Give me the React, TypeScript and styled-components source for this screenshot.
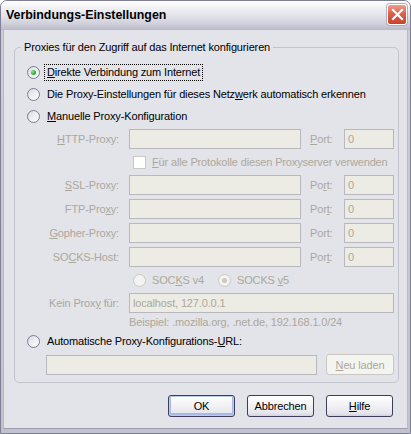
import React from "react";
import styled, { createGlobalStyle, css } from "styled-components";

const Global = createGlobalStyle`
  html, body { margin: 0; padding: 0; background: #ffffff; }
  body {
    font-family: "Liberation Sans", Arial, sans-serif;
    font-size: 11px;
    letter-spacing: -0.15px;
    color: #000;
  }
  * { box-sizing: border-box; }
`;

const disabledText = "#aca899";

const Window = styled.div`
  width: 411px;
  height: 434px;
  display: flex;
  flex-direction: column;
  border: 1px solid #7e7e94;
  border-radius: 7px 7px 0 0;
  background: #d4d4de;
  overflow: hidden;
`;

const TitleBar = styled.div`
  height: 29px;
  flex: none;
  display: flex;
  align-items: flex-start;
  justify-content: space-between;
  padding: 0 3px 0 5px;
  background: linear-gradient(
    to bottom,
    #ffffff 0%,
    #f1f1f5 25%,
    #e0e0e8 55%,
    #cfcfda 80%,
    #b9b9c8 100%
  );
`;

const Title = styled.div`
  font-family: "Liberation Sans", Arial, sans-serif;
  font-weight: bold;
  font-size: 12.4px;
  letter-spacing: 0;
  line-height: 29px;
  color: #000;
`;

const CloseButton = styled.div`
  margin-top: 3px;
  width: 20px;
  height: 21px;
  border-radius: 3px;
  border: 1px solid #ffffff;
  box-shadow: 0 0 0 1px #b0b0bf;
  background: linear-gradient(to bottom, #ec9d8e 0%, #df5f48 45%, #c94329 100%);
  display: flex;
  align-items: center;
  justify-content: center;
`;

const Frame = styled.div`
  flex: 1;
  display: flex;
  padding: 0 3px 4px;
  background: linear-gradient(to bottom, #cdcdd8, #c2c2ce);
`;

const Body = styled.div`
  flex: 1;
  display: flex;
  flex-direction: column;
  padding: 11px 8px 0 10px;
  background: #e3e3ea;
  border-left: 1px solid #b9b9c7;
  border-right: 1px solid #b9b9c7;
  border-bottom: 1px solid #9d9daf;
  margin-left: -1px;
  margin-right: -1px;
`;

const Group = styled.fieldset`
  margin: 0;
  padding: 0;
  min-width: 0;
  border: 1px solid #c3c3cd;
  border-radius: 5px;
`;

const Legend = styled.legend`
  margin-left: 6px;
  padding: 0 3px;
  line-height: 13px;
  font-size: 11px;
  color: #000;
`;

const Content = styled.div`
  display: flex;
  flex-direction: column;
  padding: 7px 3px 7px 0;
`;

const RadioRow = styled.div`
  height: 22px;
  display: flex;
  align-items: center;
  padding-left: 12px;
`;

const RadioCircle = styled.span<{ $checked?: boolean; $disabled?: boolean }>`
  position: relative;
  flex: none;
  width: 13px;
  height: 13px;
  border-radius: 50%;
  border: 1px solid ${(p) => (p.$disabled ? "#cac8c0" : "#7c7c95")};
  background: ${(p) =>
    p.$disabled
      ? "#f3f3f3"
      : "linear-gradient(135deg, #d6d6df 0%, #ececf1 45%, #ffffff 100%)"};
  ${(p) =>
    p.$checked &&
    css`
      &::after {
        content: "";
        position: absolute;
        left: 3px;
        top: 3px;
        width: 5px;
        height: 5px;
        border-radius: 50%;
        background: ${p.$disabled
          ? "#cac8c0"
          : "radial-gradient(circle at 35% 35%, #8ee58e 0%, #2fb12f 55%, #178f17 100%)"};
      }
    `}
`;

const RadioLabel = styled.span<{ $focused?: boolean; $disabled?: boolean }>`
  margin-left: 4px;
  padding: 0 2px;
  line-height: 15px;
  border: 1px dotted ${(p) => (p.$focused ? "#000" : "transparent")};
  color: ${(p) => (p.$disabled ? disabledText : "#000")};
  white-space: nowrap;
`;

const Key = styled.span`
  text-decoration: underline;
`;

const ManualGrid = styled.div`
  margin-top: 2px;
  display: grid;
  grid-template-columns: 114px 172px 43px 50px;
  row-gap: 4px;
  align-items: center;
`;

const FieldLabel = styled.label`
  text-align: right;
  padding-right: 10px;
  color: ${disabledText};
  white-space: nowrap;
`;

const PortLabel = styled.label`
  padding-left: 9px;
  color: ${disabledText};
  white-space: nowrap;
`;

const TextBox = styled.div<{ $span?: number }>`
  height: 20px;
  line-height: 18px;
  padding: 0 3px;
  border: 1px solid #b9b9bd;
  background: #ecebe4;
  color: ${disabledText};
  white-space: nowrap;
  ${(p) => p.$span && css`grid-column: span ${p.$span};`}
`;

const OptionLine = styled.div<{ $height: number }>`
  grid-column: 2 / span 3;
  height: ${(p) => p.$height}px;
  display: flex;
  align-items: center;
  padding-left: 4px;
  color: ${disabledText};
  white-space: nowrap;
`;

const CheckBox = styled.span`
  flex: none;
  width: 13px;
  height: 13px;
  border: 1px solid #cac8c0;
  background: #ffffff;
  margin-right: 6px;
`;

const SocksOption = styled.div`
  display: flex;
  align-items: center;
  margin-right: 14px;
  & > span:last-child {
    margin-left: 6px;
  }
`;

const Hint = styled.div`
  grid-column: 2 / span 3;
  height: 16px;
  line-height: 16px;
  margin-top: -3px;
  color: ${disabledText};
  white-space: nowrap;
`;

const UrlRow = styled.div`
  margin-top: 2px;
  padding-left: 31px;
  display: flex;
  align-items: center;
  gap: 9px;
`;

const UrlBox = styled(TextBox)`
  width: 271px;
`;

const buttonBase = css`
  height: 22px;
  border-radius: 3px;
  font-family: "Liberation Sans", Arial, sans-serif;
  font-size: 11px;
  display: flex;
  align-items: center;
  justify-content: center;
`;

const SmallButton = styled.div`
  ${buttonBase};
  width: 68px;
  height: 21px;
  border: 1px solid #cac8c0;
  background: #f4f4f1;
  color: ${disabledText};
`;

const ButtonBar = styled.div`
  display: flex;
  justify-content: flex-end;
  gap: 12px;
  margin-top: 12px;
  padding-right: 6px;
`;

const DialogButton = styled.div<{ $default?: boolean }>`
  ${buttonBase};
  width: 67px;
  border: 1px solid #3d3d5c;
  color: #000;
  background: linear-gradient(to bottom, #ffffff 0%, #f4f4f7 40%, #e6e6ec 85%, #d2d2dc 100%);
  ${(p) =>
    p.$default &&
    css`
      box-shadow: inset 0 0 0 1px #b9cbef, inset 0 -1px 0 2px #a4bbe8;
    `}
`;

const CloseIcon = () => (
  <svg width="13" height="13" viewBox="0 0 13 13">
    <path d="M2 2 L11 11 M11 2 L2 11" stroke="#ffffff" strokeWidth="2.2" strokeLinecap="square" />
  </svg>
);

type ProxyRowProps = {
  label: React.ReactNode;
  port: React.ReactNode;
};

const ProxyRow = ({ label, port }: ProxyRowProps) => (
  <>
    <FieldLabel>{label}</FieldLabel>
    <TextBox />
    <PortLabel>{port}</PortLabel>
    <TextBox>0</TextBox>
  </>
);

export default function App() {
  return (
    <>
      <Global />
      <Window>
        <TitleBar>
          <Title>Verbindungs-Einstellungen</Title>
          <CloseButton>
            <CloseIcon />
          </CloseButton>
        </TitleBar>
        <Frame>
          <Body>
            <Group>
              <Legend>Proxies für den Zugriff auf das Internet konfigurieren</Legend>
              <Content>
                <RadioRow>
                  <RadioCircle $checked />
                  <RadioLabel $focused>
                    <Key>D</Key>irekte Verbindung zum Internet
                  </RadioLabel>
                </RadioRow>
                <RadioRow>
                  <RadioCircle />
                  <RadioLabel>
                    Die Proxy-Einstellungen für dieses Netz<Key>w</Key>erk automatisch erkennen
                  </RadioLabel>
                </RadioRow>
                <RadioRow>
                  <RadioCircle />
                  <RadioLabel>
                    <Key>M</Key>anuelle Proxy-Konfiguration
                  </RadioLabel>
                </RadioRow>
                <ManualGrid>
                  <ProxyRow
                    label={<><Key>H</Key>TTP-Proxy:</>}
                    port={<><Key>P</Key>ort:</>}
                  />
                  <OptionLine $height={18}>
                    <CheckBox />
                    <span>
                      <Key>F</Key>ür alle Protokolle diesen Proxyserver verwenden
                    </span>
                  </OptionLine>
                  <ProxyRow
                    label={<><Key>S</Key>SL-Proxy:</>}
                    port={<>Po<Key>r</Key>t:</>}
                  />
                  <ProxyRow
                    label={<>FTP-Pro<Key>x</Key>y:</>}
                    port={<>Por<Key>t</Key>:</>}
                  />
                  <ProxyRow
                    label={<><Key>G</Key>opher-Proxy:</>}
                    port={<>Port:</>}
                  />
                  <ProxyRow
                    label={<>SO<Key>C</Key>KS-Host:</>}
                    port={<>Por<Key>t</Key>:</>}
                  />
                  <OptionLine $height={18}>
                    <SocksOption>
                      <RadioCircle $disabled />
                      <span>
                        SOC<Key>K</Key>S v4
                      </span>
                    </SocksOption>
                    <SocksOption>
                      <RadioCircle $disabled $checked />
                      <span>
                        SOCKS <Key>v</Key>5
                      </span>
                    </SocksOption>
                  </OptionLine>
                  <FieldLabel>
                    Kein Prox<Key>y</Key> für:
                  </FieldLabel>
                  <TextBox $span={3}>localhost, 127.0.0.1</TextBox>
                  <Hint>Beispiel: .mozilla.org, .net.de, 192.168.1.0/24</Hint>
                </ManualGrid>
                <RadioRow>
                  <RadioCircle />
                  <RadioLabel>
                    Automatische Proxy-Konfigurations-<Key>U</Key>RL:
                  </RadioLabel>
                </RadioRow>
                <UrlRow>
                  <UrlBox />
                  <SmallButton>
                    <span>
                      <Key>N</Key>eu laden
                    </span>
                  </SmallButton>
                </UrlRow>
              </Content>
            </Group>
            <ButtonBar>
              <DialogButton $default>OK</DialogButton>
              <DialogButton>Abbrechen</DialogButton>
              <DialogButton>
                <span>
                  <Key>H</Key>ilfe
                </span>
              </DialogButton>
            </ButtonBar>
          </Body>
        </Frame>
      </Window>
    </>
  );
}
